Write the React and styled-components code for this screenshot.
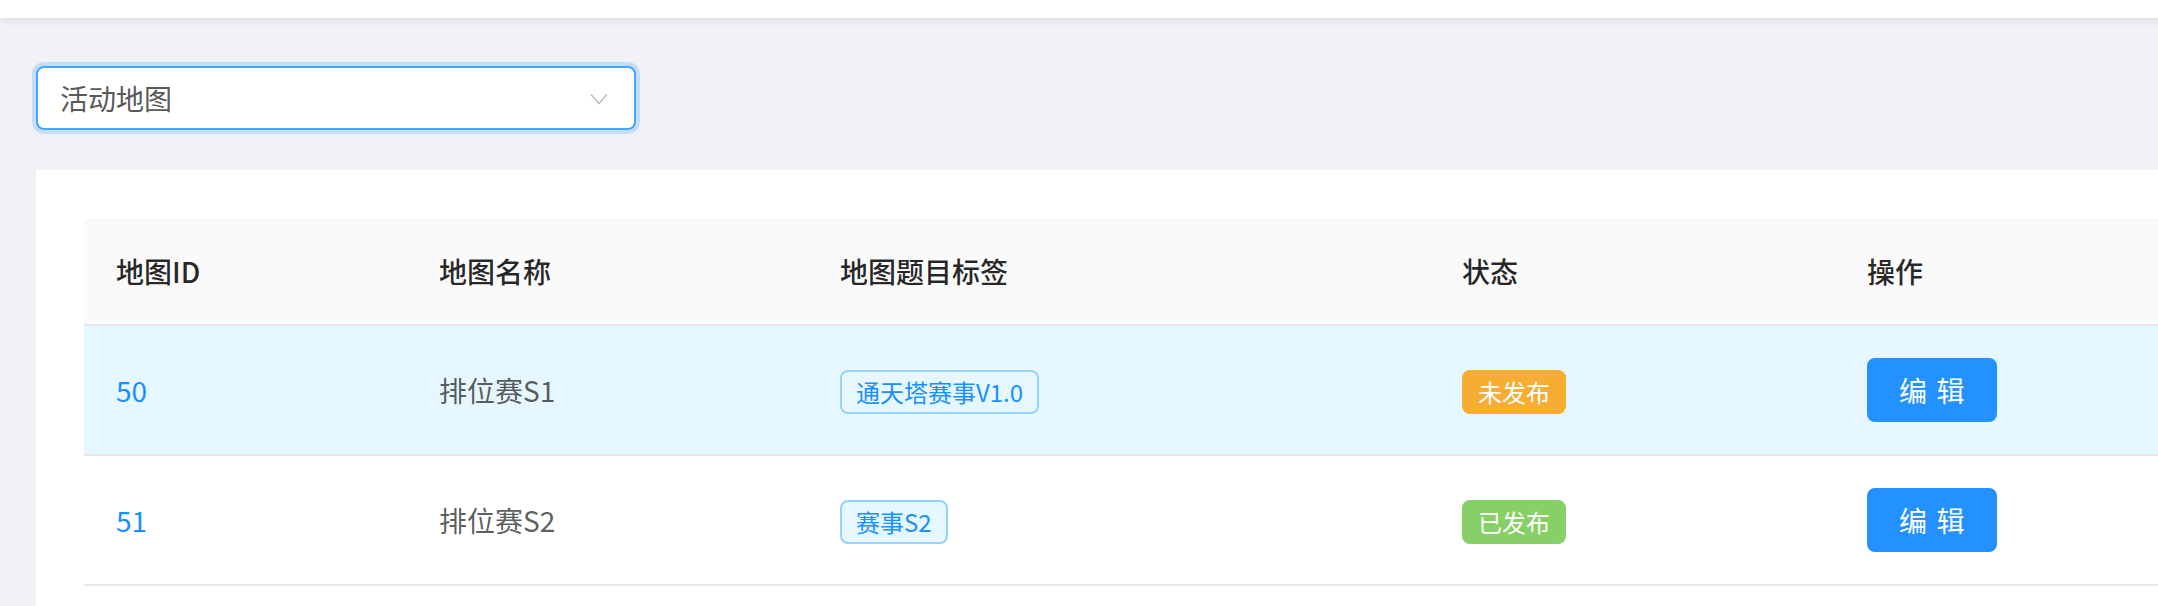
import React from "react";
import styled, { createGlobalStyle } from "styled-components";

const GlobalStyle = createGlobalStyle`
  html, body {
    margin: 0;
    padding: 0;
    overflow: hidden;
    background: #f0f2f5;
  }
  body {
    font-family: "Noto Sans CJK SC", "Noto Sans", sans-serif;
    -webkit-font-smoothing: antialiased;
  }
`;

const Page = styled.div`
  width: 2300px;
  min-height: 606px;
  background: #f0f2f5;
  display: flex;
  flex-direction: column;
`;

const TopBar = styled.header`
  height: 18px;
  background: #ffffff;
  box-shadow: 0 2px 8px rgba(0, 21, 41, 0.1);
  position: relative;
  z-index: 1;
`;

const Content = styled.main`
  padding: 48px 0 0 36px;
  display: flex;
  flex-direction: column;
  gap: 40px;
`;

const Select = styled.div`
  box-sizing: border-box;
  width: 600px;
  height: 64px;
  background: #fff;
  border: 2px solid #40a9ff;
  border-radius: 8px;
  box-shadow: 0 0 0 4px rgba(24, 144, 255, 0.2);
  display: flex;
  align-items: center;
  justify-content: space-between;
  padding: 0 26px 0 22px;
  font-size: 28px;
  color: #595959;
`;

const Chevron = styled.svg`
  display: block;
  margin-top: 2px;
`;

const Card = styled.section`
  background: #fff;
  padding: 48px;
  flex: 1;
`;

const Table = styled.table`
  width: 100%;
  border-collapse: separate;
  border-spacing: 0;
  table-layout: fixed;
  font-size: 28px;
  line-height: 42px;
`;

const Th = styled.th`
  box-sizing: border-box;
  text-align: left;
  font-weight: 500;
  color: rgba(0, 0, 0, 0.85);
  background: #fafafa;
  padding: 32px;
  border-bottom: 2px solid #e8e8e8;
  width: ${(p) => (p.$w ? `${p.$w}px` : "auto")};
  &:first-child {
    border-top-left-radius: 8px;
  }
  &:last-child {
    border-top-right-radius: 8px;
  }
`;

const Tr = styled.tr`
  background: ${(p) => (p.$active ? "#e6f7ff" : "#ffffff")};
`;

const Td = styled.td`
  padding: 32px;
  border-bottom: 2px solid #e8e8e8;
  color: rgba(0, 0, 0, 0.65);
  vertical-align: middle;
  height: 64px;
  white-space: nowrap;
`;

const IdLink = styled.a`
  color: #1890ff;
  text-decoration: none;
`;

const LabelTag = styled.span`
  display: inline-block;
  box-sizing: border-box;
  height: 44px;
  line-height: 40px;
  padding: 0 14px;
  font-size: 24px;
  color: #1890ff;
  background: #e6f7ff;
  border: 2px solid #91d5ff;
  border-radius: 8px;
  vertical-align: middle;
`;

const StatusTag = styled.span`
  display: inline-block;
  box-sizing: border-box;
  height: 44px;
  line-height: 40px;
  padding: 0 14px;
  font-size: 24px;
  color: #fff;
  background: ${(p) => p.$color};
  border: 2px solid ${(p) => p.$color};
  border-radius: 8px;
  vertical-align: middle;
`;

const EditButton = styled.button`
  box-sizing: border-box;
  height: 64px;
  padding: 0 30px;
  font-family: inherit;
  font-size: 28px;
  line-height: 60px;
  color: #fff;
  background: #2391ff;
  border: 2px solid #2391ff;
  border-radius: 8px;
  cursor: pointer;
  vertical-align: middle;
  white-space: nowrap;
  letter-spacing: 0.34em;
  & > span {
    display: inline-block;
    margin-right: -0.34em;
  }
`;

const rows = [
  { id: 50, name: "排位赛S1", tag: "通天塔赛事V1.0", status: "未发布", color: "#f7ac32", active: true },
  { id: 51, name: "排位赛S2", tag: "赛事S2", status: "已发布", color: "#87d068", active: false },
];

export default function App() {
  return (
    <>
      <GlobalStyle />
      <Page>
        <TopBar />
        <Content>
          <Select>
            <span>活动地图</span>
            <Chevron width="18" height="12" viewBox="0 0 18 12">
              <polyline points="1,1.5 9,10.5 17,1.5" fill="none" stroke="#bfbfbf" strokeWidth="1.6" />
            </Chevron>
          </Select>
          <Card>
            <Table>
              <thead>
                <tr>
                  <Th $w={323}>地图ID</Th>
                  <Th $w={401}>地图名称</Th>
                  <Th $w={622}>地图题目标签</Th>
                  <Th $w={405}>状态</Th>
                  <Th>操作</Th>
                </tr>
              </thead>
              <tbody>
                {rows.map((r) => (
                  <Tr key={r.id} $active={r.active}>
                    <Td>
                      <IdLink>{r.id}</IdLink>
                    </Td>
                    <Td>{r.name}</Td>
                    <Td>
                      <LabelTag>{r.tag}</LabelTag>
                    </Td>
                    <Td>
                      <StatusTag $color={r.color}>{r.status}</StatusTag>
                    </Td>
                    <Td>
                      <EditButton>
                        <span>编辑</span>
                      </EditButton>
                    </Td>
                  </Tr>
                ))}
              </tbody>
            </Table>
          </Card>
        </Content>
      </Page>
    </>
  );
}
